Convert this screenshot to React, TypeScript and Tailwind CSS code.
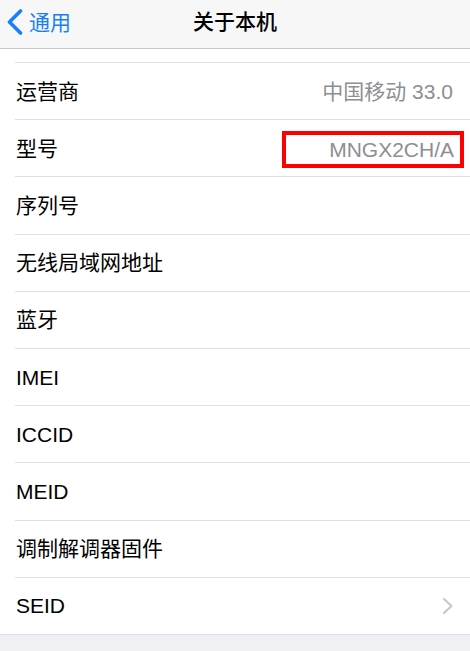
import React from "react";

const rows: { label: string; value?: string; boxed?: boolean; chevron?: boolean }[] = [
  { label: "运营商", value: "中国移动 33.0" },
  { label: "型号", value: "MNGX2CH/A", boxed: true },
  { label: "序列号" },
  { label: "无线局域网地址" },
  { label: "蓝牙" },
  { label: "IMEI" },
  { label: "ICCID" },
  { label: "MEID" },
  { label: "调制解调器固件" },
  { label: "SEID", chevron: true },
];

const font = { fontFamily: '"Liberation Sans", "Noto Sans CJK SC", sans-serif' };

export default function App() {
  return (
    <div className="w-[470px] h-[651px] bg-[#efeff4] flex flex-col overflow-hidden" style={font}>
      <div className="h-[49px] bg-[#f7f7f7] border-b border-[#c8c7cc] relative flex items-center justify-center pb-[5px] shrink-0">
        <div className="absolute left-[7px] top-[9px] flex items-center gap-[6px] text-[#1a7ff5]">
          <svg width="16" height="26" viewBox="0 0 16 26" fill="none">
            <path d="M13.5 2 L2.5 13 L13.5 24" stroke="#1a7ff5" strokeWidth="3.6" strokeLinecap="round" strokeLinejoin="round" />
          </svg>
          <span className="text-[21px] leading-none">通用</span>
        </div>
        <span className="text-[21px] font-medium text-black leading-none">关于本机</span>
      </div>
      <div className="bg-white shrink-0">
        <div className="h-[13px]" />
        {rows.map((r) => (
          <div key={r.label} className="h-[57.2px] flex flex-col">
            <div className="ml-[15px] border-t border-[#e0e0e4]" />
            <div className="flex-1 flex items-center justify-between pl-[16px] pr-[6px]">
              <span className="text-[21px] text-black leading-none">{r.label}</span>
              {r.value && !r.boxed && (
                <span className="text-[21px] text-[#8e8e93] leading-none pr-[11px]">{r.value}</span>
              )}
              {r.boxed && (
                <div className="w-[182px] h-[37px] border-[4.5px] border-[#ff0000] flex items-center justify-end pr-[6px] mb-[-2px]">
                  <span className="text-[21px] text-[#8e8e93] leading-none">{r.value}</span>
                </div>
              )}
              {r.chevron && (
                <svg width="12" height="18" viewBox="0 0 12 18" fill="none" className="mr-[10px]">
                  <path d="M2 2 L9.5 9 L2 16" stroke="#c7c7cc" strokeWidth="2.2" strokeLinecap="round" strokeLinejoin="round" />
                </svg>
              )}
            </div>
          </div>
        ))}
      </div>
      <div className="border-t border-[#e0e0e4] flex-1" />
    </div>
  );
}
